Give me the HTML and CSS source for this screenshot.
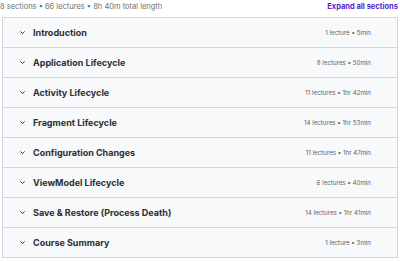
FILE: index.html
```html
<!DOCTYPE html>
<html lang="en">
<head>
  <meta charset="UTF-8">
  <title>Course content</title>
  <link rel="stylesheet" href="styles.css">
</head>
<body>
  <div class="curriculum">
    <div class="curriculum-head">
      <span class="summary">8 sections • 66 lectures • 8h 40m total length</span>
      <a class="expand" href="javascript:;">Expand all sections</a>
    </div>
    <ul class="sections">
      <li class="section"><span class="chev"><svg viewBox="0 0 10 10" width="7" height="7"><path d="M2 3.5 L5 6.5 L8 3.5" fill="none" stroke="#2d2f31" stroke-width="1.4"/></svg></span><span class="title">Introduction</span><span class="meta">1 lecture • 5min</span></li>
      <li class="section"><span class="chev"><svg viewBox="0 0 10 10" width="7" height="7"><path d="M2 3.5 L5 6.5 L8 3.5" fill="none" stroke="#2d2f31" stroke-width="1.4"/></svg></span><span class="title">Application Lifecycle</span><span class="meta">8 lectures • 50min</span></li>
      <li class="section"><span class="chev"><svg viewBox="0 0 10 10" width="7" height="7"><path d="M2 3.5 L5 6.5 L8 3.5" fill="none" stroke="#2d2f31" stroke-width="1.4"/></svg></span><span class="title">Activity Lifecycle</span><span class="meta">11 lectures • 1hr 42min</span></li>
      <li class="section"><span class="chev"><svg viewBox="0 0 10 10" width="7" height="7"><path d="M2 3.5 L5 6.5 L8 3.5" fill="none" stroke="#2d2f31" stroke-width="1.4"/></svg></span><span class="title">Fragment Lifecycle</span><span class="meta">14 lectures • 1hr 53min</span></li>
      <li class="section"><span class="chev"><svg viewBox="0 0 10 10" width="7" height="7"><path d="M2 3.5 L5 6.5 L8 3.5" fill="none" stroke="#2d2f31" stroke-width="1.4"/></svg></span><span class="title">Configuration Changes</span><span class="meta">11 lectures • 1hr 47min</span></li>
      <li class="section"><span class="chev"><svg viewBox="0 0 10 10" width="7" height="7"><path d="M2 3.5 L5 6.5 L8 3.5" fill="none" stroke="#2d2f31" stroke-width="1.4"/></svg></span><span class="title">ViewModel Lifecycle</span><span class="meta">6 lectures • 40min</span></li>
      <li class="section"><span class="chev"><svg viewBox="0 0 10 10" width="7" height="7"><path d="M2 3.5 L5 6.5 L8 3.5" fill="none" stroke="#2d2f31" stroke-width="1.4"/></svg></span><span class="title">Save &amp; Restore (Process Death)</span><span class="meta">14 lectures • 1hr 41min</span></li>
      <li class="section"><span class="chev"><svg viewBox="0 0 10 10" width="7" height="7"><path d="M2 3.5 L5 6.5 L8 3.5" fill="none" stroke="#2d2f31" stroke-width="1.4"/></svg></span><span class="title">Course Summary</span><span class="meta">1 lecture • 3min</span></li>
    </ul>
  </div>
</body>
</html>
```

FILE: styles.css
```css
body {
  margin: 0;
  background: #fff;
  font-family: Inter, "Noto Sans", sans-serif;
  color: #2d2f31;
}
.curriculum {
  width: 400px;
}
.curriculum-head {
  display: flex;
  justify-content: space-between;
  align-items: center;
  height: 13px;
  padding: 0 2px 4px 0;
  font-size: 7.5px;
}
.summary {
  color: #6a6f73;
}
.expand {
  color: #5624d0;
  font-weight: 700;
  text-decoration: none;
}
.sections {
  list-style: none;
  margin: 0 2px 0 2px;
  padding: 0;
  border: 1px solid #d1d7dc;
  border-bottom: none;
}
.section {
  display: flex;
  align-items: center;
  height: 29px;
  padding: 0 26px 0 16px;
  background: #f7f9fa;
  border-bottom: 1px solid #d1d7dc;
}
.chev {
  display: flex;
  width: 14px;
}
.title {
  flex: 1;
  font-size: 9px;
  font-weight: 700;
}
.meta {
  font-size: 6.2px;
  color: #5f6468;
}
```
